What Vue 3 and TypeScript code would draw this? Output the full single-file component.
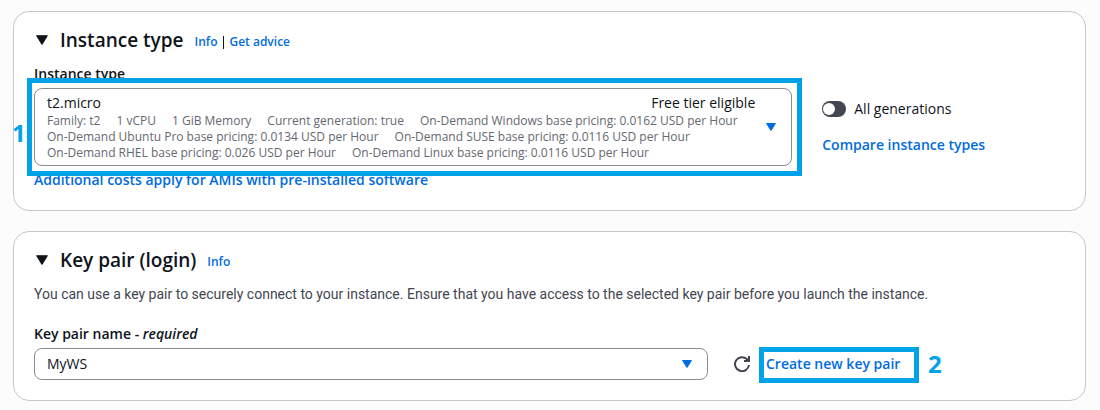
<script setup lang="ts">
import { ref } from 'vue'

const specs: string[][] = [
  ['Family: t2', '1 vCPU', '1 GiB Memory', 'Current generation: true', 'On-Demand Windows base pricing: 0.0162 USD per Hour'],
  ['On-Demand Ubuntu Pro base pricing: 0.0134 USD per Hour', 'On-Demand SUSE base pricing: 0.0116 USD per Hour'],
  ['On-Demand RHEL base pricing: 0.026 USD per Hour', 'On-Demand Linux base pricing: 0.0116 USD per Hour'],
]
const keyPair = ref('MyWS')
const allGenerations = ref(false)
</script>

<template>
  <main class="page">
    <section class="card">
      <header class="head">
        <button class="toggle" type="button" aria-label="Collapse instance type" aria-expanded="true">
          <svg width="12" height="10" viewBox="0 0 12 10"><path d="M0.8 0.8h10.4L6 9.2z" fill="#0f141a" stroke="#0f141a" stroke-width="1.2" stroke-linejoin="round" /></svg>
        </button>
        <h2>Instance type</h2>
        <nav class="links"><a href="#info">Info</a><span class="bar" /><a href="#advice">Get advice</a></nav>
      </header>
      <div class="grid wide">
        <div class="field">
          <label class="label" for="instance">Instance type</label>
          <div class="marked">
            <button id="instance" class="box rich" type="button" aria-haspopup="listbox">
              <span class="option">
                <span class="top"><span>t2.micro</span><span>Free tier eligible</span></span>
                <span v-for="(line, i) in specs" :key="i" class="line">
                  <span v-for="s in line" :key="s">{{ s }}</span>
                </span>
              </span>
              <svg class="caret" width="10" height="8" viewBox="0 0 10 8"><path d="M0.6 0.5h8.8L5 7.5z" fill="#006ce0" stroke="#006ce0" stroke-linejoin="round" /></svg>
            </button>
            <span class="frame frame-one" />
            <span class="step step-one">1</span>
          </div>
          <a class="link" href="#costs">Additional costs apply for AMIs with pre-installed software</a>
        </div>
        <div class="side">
          <label class="switch"><input v-model="allGenerations" type="checkbox" role="switch"><span>All generations</span></label>
          <a class="link" href="#compare">Compare instance types</a>
        </div>
      </div>
    </section>

    <section class="card">
      <header class="head">
        <button class="toggle" type="button" aria-label="Collapse key pair" aria-expanded="true">
          <svg width="12" height="10" viewBox="0 0 12 10"><path d="M0.8 0.8h10.4L6 9.2z" fill="#0f141a" stroke="#0f141a" stroke-width="1.2" stroke-linejoin="round" /></svg>
        </button>
        <h2>Key pair (login)</h2>
        <nav class="links"><a href="#key-info">Info</a></nav>
      </header>
      <p class="desc">You can use a key pair to securely connect to your instance. Ensure that you have access to the selected key pair before you launch the instance.</p>
      <label class="label" for="key">Key pair name - <i>required</i></label>
      <div class="grid">
        <div class="select">
          <select id="key" v-model="keyPair" class="box"><option>MyWS</option></select>
          <svg class="caret over" width="10" height="8" viewBox="0 0 10 8"><path d="M0.6 0.5h8.8L5 7.5z" fill="#006ce0" stroke="#006ce0" stroke-linejoin="round" /></svg>
        </div>
        <div class="actions">
          <button class="refresh" type="button" aria-label="Refresh key pairs">
            <svg width="16" height="16" viewBox="0 0 16 16" fill="none" stroke="#424650" stroke-width="2"><path d="M15 9a7 7 0 1 1-2.2-6L15 5" /><path d="M15 0v5h-5" /></svg>
          </button>
          <div class="marked">
            <a class="link" href="#create">Create new key pair</a>
            <span class="frame frame-two" />
            <span class="step step-two">2</span>
          </div>
        </div>
      </div>
    </section>
  </main>
</template>

<style>
body { margin: 0; background: #fcfcfd; }
</style>

<style scoped>
* { box-sizing: border-box; }
.page { display: flex; flex-direction: column; gap: 20px; padding: 11px 14px 8px 13px; font: 14px/20px "Open Sans", "Noto Sans", sans-serif; color: #0f141a; }
.card { background: #fff; border: 1px solid #c6c6cd; border-radius: 16px; padding: 15px 20px 20px; }
.head { display: flex; align-items: center; height: 25px; }
.toggle { display: flex; border: 0; background: none; padding: 0 12px 0 2px; }
h2 { margin: 0; font-size: 19px; line-height: 24px; font-weight: 600; }
.links { display: flex; align-items: center; margin: 5px 0 0 11px; font-size: 12px; line-height: 16px; font-weight: 600; }
.bar { width: 1px; height: 13px; margin: 0 5px 0 6px; background: #0f141a; }
a { color: #006ce0; text-decoration: none; }
.grid { display: grid; grid-template-columns: 2fr 1fr; gap: 20px; }
.wide { grid-template-columns: 3fr 1fr; margin-top: 12px; }
.field { display: flex; flex-direction: column; align-items: stretch; }
.label { display: block; font-weight: 600; margin-bottom: 4px; }
.link { font-weight: 600; }
.marked { position: relative; }
.box { width: 100%; border: 1px solid #8c8c94; border-radius: 8px; background: #fff; color: #0f141a; font: inherit; }
.rich { display: flex; align-items: center; justify-content: space-between; padding: 4px 15px 4px 12px; text-align: left; }
.option { flex: 1; margin-right: 11px; }
.top { display: flex; justify-content: space-between; }
.line { display: flex; gap: 16px; font-size: 12px; line-height: 16px; color: #656871; white-space: nowrap; }
.field .link { margin-top: 4px; }
.side { display: flex; flex-direction: column; gap: 16px; align-items: flex-start; padding: 35px 0 0 10px; }
.switch { display: flex; align-items: center; gap: 8px; }
.switch input { appearance: none; width: 24px; height: 16px; margin: 0; padding: 2px 1px; border-radius: 8px; background: #424650; }
.switch input::before { content: ""; display: block; width: 12px; height: 12px; border-radius: 6px; background: #fff; }
.switch input:checked { background: #006ce0; }
.switch input:checked::before { margin-left: auto; }
.desc { margin: 12px 0 20px; color: #424650; font-family: Roboto, "Open Sans", sans-serif; }
.select { position: relative; }
.select .box { appearance: none; height: 32px; padding: 0 30px 0 12px; display: block; }
.over { position: absolute; right: 16px; top: 12px; pointer-events: none; }
.actions { display: flex; align-items: center; }
.refresh { display: flex; border: 0; background: none; padding: 0 16px 0 6px; }
.frame { position: absolute; border: 5px solid #00a2e8; pointer-events: none; }
.frame-one { inset: -10px -10px -10px -7px; }
.frame-two { top: -7px; left: -7px; width: 160px; height: 36px; }
.step { position: absolute; font-size: 24px; line-height: 24px; font-weight: 700; color: #00a2e8; }
.step-one { left: -22px; top: 33px; }
.step-two { left: 162px; top: -2px; }
</style>
